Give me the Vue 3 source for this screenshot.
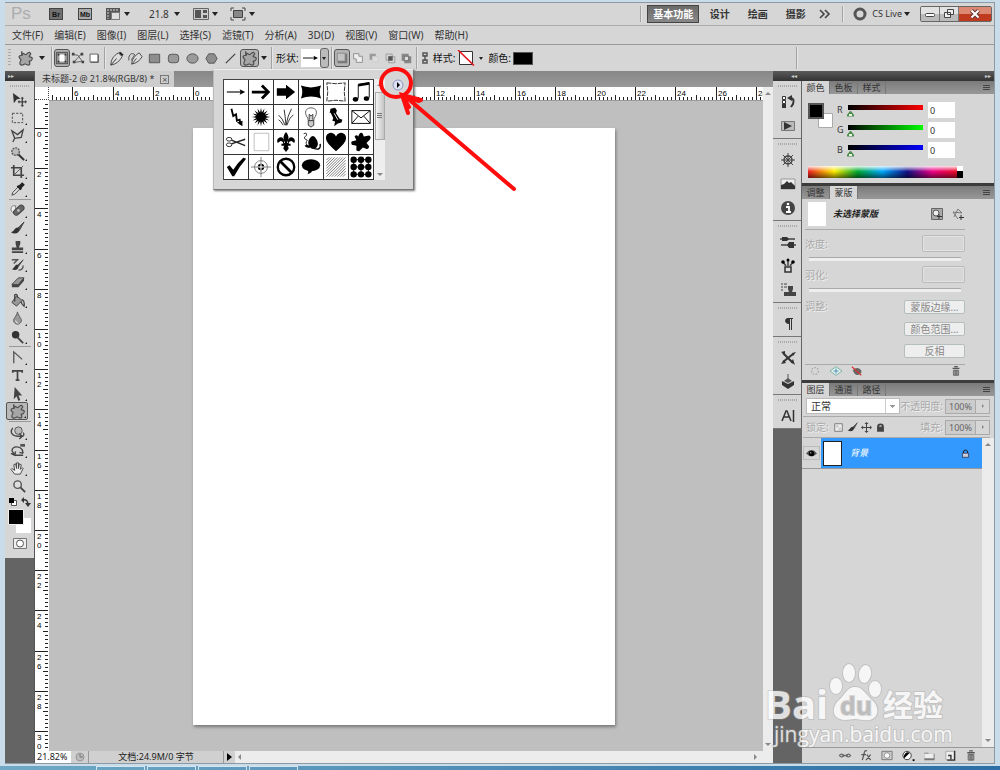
<template>
  <div class="desktop">
    <div class="window">
      <header class="title-bar">
        <span class="logo">Ps</span>
        <button class="app-badge" title="Bridge">Br</button>
        <button class="app-badge" title="Mini Bridge">Mb</button>
        <button class="title-tool" title="查看额外内容">
          <svg width="16" height="14" viewBox="0 0 16 14" v-html="icons.extras" />
          <i class="caret" />
        </button>
        <button class="title-tool zoom">21.8<i class="caret" /></button>
        <button class="title-tool" title="排列文档">
          <svg width="16" height="14" viewBox="0 0 16 14" v-html="icons.arrange" />
          <i class="caret" />
        </button>
        <button class="title-tool" title="屏幕模式">
          <svg width="16" height="14" viewBox="0 0 16 14" v-html="icons.screen" />
          <i class="caret" />
        </button>
        <span class="spacer" />
        <span class="bar-line" />
        <nav class="workspaces">
          <button
            v-for="(name, i) in workspaces"
            :key="name"
            :class="{ active: i === 0 }"
          >{{ name }}</button>
        </nav>
        <svg class="more" width="12" height="10" viewBox="0 0 12 10">
          <path d="M1 1l4 4-4 4M6 1l4 4-4 4" fill="none" stroke="#444" stroke-width="1.6" />
        </svg>
        <span class="bar-line" />
        <button class="cs-live">
          <svg width="14" height="14" viewBox="0 0 14 14">
            <circle cx="7" cy="7" r="5" fill="none" stroke="#555" stroke-width="3" />
          </svg>
          CS Live<i class="caret" />
        </button>
        <div class="win-buttons">
          <button title="最小化">
            <svg width="12" height="10" viewBox="0 0 12 10"><rect x="1.500" y="4.500" width="9" height="3" rx="1" fill="#fff" stroke="#444" /></svg>
          </button>
          <button title="还原">
            <svg width="12" height="10" viewBox="0 0 12 10"><path d="M4.500.500h6v5h-6zM1.500 3.500h6v5h-6z" fill="#eee" stroke="#444" /></svg>
          </button>
          <button class="close" title="关闭">
            <svg width="12" height="10" viewBox="0 0 12 10">
              <path d="M2.500 1.500l7 7M9.500 1.500l-7 7" stroke="#633" stroke-width="4" />
              <path d="M2.500 1.500l7 7M9.500 1.500l-7 7" stroke="#fff" stroke-width="2" />
            </svg>
          </button>
        </div>
      </header>

      <nav class="menu-bar">
        <button v-for="item in menus" :key="item">{{ item }}</button>
      </nav>

      <div class="options-bar">
        <span class="grip-v" />
        <button class="opt" title="自定形状工具"><svg viewBox="0 0 16 16" v-html="icons.blob" /></button>
        <button class="opt-caret" title="预设"><i class="caret" /></button>
        <span class="bar-line" />
        <button
          v-for="name in ['shapeLayer', 'pathMode', 'fillPixels']"
          :key="name"
          class="opt narrow"
          :class="{ pressed: name === 'shapeLayer' }"
        ><svg viewBox="0 0 16 16" v-html="icons[name]" /></button>
        <span class="bar-line" />
        <button
          v-for="name in drawTools"
          :key="name"
          class="opt"
          :class="{ pressed: name === 'blob' }"
        ><svg viewBox="0 0 16 16" v-html="icons[name]" /></button>
        <button class="opt-caret slim" title="几何选项"><i class="caret" /></button>
        <span class="bar-line" />
        <span class="opt-label">形状:</span>
        <span class="shape-preview"><svg viewBox="0 0 24 24" v-html="shapes[0]" /></span>
        <button class="shape-drop" title="形状"><i class="caret small" /></button>
        <span class="bar-line" />
        <button
          v-for="name in combineModes"
          :key="name"
          class="opt narrow"
          :class="{ pressed: name === 'newLayer' }"
        ><svg viewBox="0 0 16 16" v-html="icons[name]" /></button>
        <span class="bar-line" />
        <svg class="link" width="8" height="12" viewBox="0 0 8 12">
          <path d="M2 1h4v3H2zM2 8h4v3H2zM4 3v6" fill="none" stroke="#555" stroke-width="1.500" />
        </svg>
        <span class="opt-label">样式:</span>
        <svg class="no-style" width="18" height="16" viewBox="0 0 18 16">
          <path d="M2.500 1.500h13v13h-13z" fill="#fff" stroke="#333" />
          <path d="M1 0l16 15.500" stroke="#e8141c" stroke-width="1.600" />
        </svg>
        <button class="opt-caret slim" title="样式"><i class="caret small" /></button>
        <span class="opt-label">颜色:</span>
        <button class="color-chip" title="颜色" />
        <span class="spacer" />
        <span class="bar-line far" />
      </div>

      <div class="work-area">
        <aside class="tool-column">
          <div class="column-head"><span>▸▸</span></div>
          <div class="tools">
            <span class="grip-h" />
            <template v-for="(group, g) in tools" :key="g">
              <hr v-if="g > 0">
              <button
                v-for="name in group"
                :key="name"
                class="tool"
                :class="{ selected: name === 'blob', more: name !== 'move' && name !== 'zoom' }"
              ><svg viewBox="0 0 16 16" v-html="icons[name]" /></button>
            </template>
            <svg class="color-wells" width="26" height="60" viewBox="0 0 26 60">
              <path d="M4.500 5.500h5v5h-5z" fill="#fff" stroke="#555" />
              <path d="M2 3h5v5H2z" />
              <path d="M16 5q5-1 5 5" fill="none" stroke="#333" stroke-width="1.500" />
              <path d="M17 2v6l-3-3zM18 8h6l-3 4z" fill="#333" />
              <path d="M9 23h15v15H9z" fill="#fff" />
              <path d="M1.500 14.500h15v15h-15z" fill="#000" stroke="#eee" />
              <path d="M6.500 43.500h13v10h-13z" fill="#eee" stroke="#777" />
              <circle cx="13" cy="48.500" r="3.500" fill="#fff" stroke="#555" />
            </svg>
          </div>
        </aside>

        <main class="document">
          <div class="doc-tabs">
            <div class="doc-tab">
              未标题-2 @ 21.8%(RGB/8) *
              <button title="关闭">×</button>
            </div>
          </div>
          <div class="doc-grid">
            <div class="ruler-corner" />
            <svg class="ruler top">
              <g v-for="t in topTicks" :key="t.pos">
                <path :d="`M${t.pos}.5 ${t.top}V13`" stroke="#222" />
                <text v-if="t.label !== null" :x="t.pos + 2" y="9">{{ t.label }}</text>
              </g>
            </svg>
            <svg class="ruler side">
              <g v-for="t in sideTicks" :key="t.pos">
                <path :d="`M${t.top} ${t.pos}.5H13`" stroke="#222" />
                <template v-if="t.label !== null">
                  <text
                    v-for="(ch, i) in String(t.label)"
                    :key="i"
                    x="2"
                    :y="t.pos + 9 + i * 9"
                  >{{ ch }}</text>
                </template>
              </g>
            </svg>
            <div class="canvas"><div class="page" /></div>
            <div class="scroll-v">
              <i class="arrow up" />
              <i class="arrow down" />
            </div>
            <footer class="status-bar">
              <input aria-label="缩放" value="21.82%">
              <svg width="17" height="12" viewBox="0 0 17 12">
                <circle cx="9" cy="6" r="4" fill="#bbb" stroke="#999" />
                <path d="M9 3v3h3" fill="none" stroke="#777" />
              </svg>
              <span class="doc-size">文档:24.9M/0 字节</span>
              <button title="状态栏选项"><i class="arrow right dark" /></button>
              <div class="scroll-h">
                <i class="arrow left" />
                <i class="arrow right" />
              </div>
            </footer>
          </div>

          <div class="shape-picker">
            <div class="shape-grid">
              <button v-for="(shape, i) in shapes" :key="i">
                <svg viewBox="0 0 24 24" v-html="shape" />
              </button>
            </div>
            <div class="picker-scroll">
              <i class="arrow up" />
              <span class="thumb"><i /></span>
              <i class="arrow down" />
            </div>
            <button class="picker-menu" title="形状菜单">
              <svg width="12" height="12" viewBox="0 0 12 12">
                <circle cx="6" cy="6" r="5" fill="#dfe2f4" stroke="#8f95bd" />
                <path d="M5 3l3 3-3 3z" />
              </svg>
            </button>
          </div>
          <svg class="callout" width="150" height="130" viewBox="0 0 150 130">
            <ellipse cx="21" cy="18" rx="15" ry="14" />
            <path d="M139 124L31 32M33 48L27 30L46 35M27 30L34 42M30 31L44 36" />
          </svg>
        </main>

        <div class="right-side">
          <div class="column-head wide"><span>◂◂</span><span>▸▸</span></div>
          <div class="right-body">
            <aside class="dock">
              <div v-for="(group, g) in dockGroups" :key="g" class="dock-group">
                <span class="grip-h" />
                <button v-for="name in group" :key="name">
                  <svg viewBox="0 0 16 16" v-html="icons[name]" />
                </button>
              </div>
            </aside>

            <div class="panels">
              <section class="panel">
                <div class="panel-tabs">
                  <button class="active">颜色</button>
                  <button>色板</button>
                  <button>样式</button>
                  <i class="panel-menu" />
                </div>
                <div class="color-body">
                  <div class="color-main">
                    <svg class="wells" width="26" height="28" viewBox="0 0 26 28">
                      <path d="M10.500 10.500h14v14h-14z" fill="#fff" stroke="#aaa" />
                      <path d="M1 1h14v14H1z" stroke="#555" stroke-width="2" />
                    </svg>
                    <div class="channels">
                      <div v-for="c in channels" :key="c.name" class="channel">
                        <label :for="'ch-' + c.name">{{ c.name }}</label>
                        <input
                          type="range"
                          min="0"
                          max="255"
                          :value="c.value"
                          :class="c.name"
                          :aria-label="c.name"
                        >
                        <input :id="'ch-' + c.name" class="value" :value="c.value">
                      </div>
                    </div>
                  </div>
                  <div class="spectrum"><i /></div>
                </div>
              </section>

              <section class="panel">
                <div class="panel-tabs">
                  <button>调整</button>
                  <button class="active">蒙版</button>
                  <i class="panel-menu" />
                </div>
                <div class="mask-body">
                  <div class="mask-head">
                    <span class="mask-thumb" />
                    <strong>未选择蒙版</strong>
                    <svg width="14" height="14" viewBox="0 0 14 14" v-html="icons.pixelMask" />
                    <svg width="14" height="14" viewBox="0 0 14 14" v-html="icons.vectorMask" />
                  </div>
                  <div class="mask-row">
                    <label for="density">浓度:</label>
                    <input id="density" disabled>
                  </div>
                  <input class="flat-range" type="range" aria-label="浓度" disabled>
                  <div class="mask-row">
                    <label for="feather">羽化:</label>
                    <input id="feather" disabled>
                  </div>
                  <input class="flat-range" type="range" aria-label="羽化" disabled>
                  <div class="refine">
                    <span>调整:</span>
                    <div>
                      <button disabled>蒙版边缘...</button>
                      <button disabled>颜色范围...</button>
                      <button disabled>反相</button>
                    </div>
                  </div>
                  <div class="mask-foot">
                    <svg viewBox="0 0 14 14"><circle cx="7" cy="7" r="4" fill="none" stroke="#aaa" stroke-width="1.500" stroke-dasharray="2 1.500" /></svg>
                    <svg viewBox="0 0 14 14"><path d="M0 7l7-5 7 5-7 5z" fill="#e4f3ef" stroke="#6fa8a0" /><path d="M7 4v6M4 7h6" stroke="#3a87a8" /></svg>
                    <svg viewBox="0 0 14 14"><path d="M2 6q5-5 10 0v3q-4 5-8 1z" fill="#666" /><path d="M1 2l11 10" stroke="#d33" stroke-width="1.300" /></svg>
                    <span class="spacer" />
                    <svg viewBox="0 0 14 14" v-html="icons.trash" />
                  </div>
                </div>
              </section>

              <section class="panel layers">
                <div class="panel-tabs">
                  <button class="active">图层</button>
                  <button>通道</button>
                  <button>路径</button>
                  <i class="panel-menu" />
                </div>
                <div class="layer-opts">
                  <select aria-label="混合模式">
                    <option>正常</option>
                  </select>
                  <label for="opacity">不透明度:</label>
                  <input id="opacity" value="100%" disabled>
                  <button class="step" disabled title="不透明度"><i class="arrow right" /></button>
                </div>
                <div class="layer-opts">
                  <span class="faded">锁定:</span>
                  <button
                    v-for="name in ['lockPixels', 'brush', 'lockMove', 'lock']"
                    :key="name"
                    class="lock-btn"
                  ><svg viewBox="0 0 16 16" v-html="icons[name]" /></button>
                  <label for="fill">填充:</label>
                  <input id="fill" value="100%" disabled>
                  <button class="step" disabled title="填充"><i class="arrow right" /></button>
                </div>
                <div class="layer-list">
                  <div class="layer-rows">
                    <div class="layer-row">
                      <button class="eye" title="可见性">
                        <svg viewBox="0 0 16 16"><path d="M0 8q8-10 16 0q-8 8-16 0z" fill="#555" /><circle cx="8" cy="8" r="4" /><circle cx="7" cy="7" r="1" fill="#fff" /></svg>
                      </button>
                      <div class="layer-item">
                        <span class="layer-thumb" />
                        <em>背景</em>
                        <svg viewBox="0 0 16 16" v-html="icons.layerLock" />
                      </div>
                    </div>
                  </div>
                  <div class="scroll-v">
                    <i class="arrow up" />
                    <i class="arrow down" />
                  </div>
                </div>
                <div class="layer-foot">
                  <button v-for="name in layerActions" :key="name">
                    <svg viewBox="0 0 14 14" v-html="icons[name]" />
                  </button>
                </div>
              </section>
            </div>
          </div>
        </div>
      </div>
    </div>

    <div class="taskbar"><i v-for="n in 4" :key="n" /></div>

    <svg class="watermark" width="190" height="92" viewBox="0 0 190 92">
      <g class="brand">
        <text x="0" y="61" font-size="40" font-weight="700">Bai</text>
        <ellipse cx="71" cy="28" rx="6" ry="8" />
        <ellipse cx="84" cy="15" rx="6" ry="9" />
        <ellipse cx="100" cy="16" rx="6" ry="9" transform="rotate(10 100 16)" />
        <ellipse cx="110" cy="31" rx="6" ry="8" />
        <path d="M90 29C98 29 101 37 107 42C114 48 115 59 105 62C99 63 95 61 90 61C85 61 80 63 75 61C66 58 68 47 74 42C80 37 82 29 90 29z" />
        <text class="du" x="75" y="57" font-size="25" font-weight="700">du</text>
        <text x="118" y="58" font-size="30" font-weight="700">经验</text>
        <text x="9" y="84" font-size="21">jingyan.baidu.com</text>
      </g>
    </svg>
  </div>
</template>

<script setup>
import { computed } from 'vue'

const menus = [
  '文件(F)', '编辑(E)', '图像(I)', '图层(L)', '选择(S)', '滤镜(T)',
  '分析(A)', '3D(D)', '视图(V)', '窗口(W)', '帮助(H)'
]
const workspaces = ['基本功能', '设计', '绘画', '摄影']

const drawTools = ['pen', 'freePen', 'rect', 'roundRect', 'ellipse', 'polygon', 'line', 'blob']
const combineModes = ['newLayer', 'add', 'subtract', 'intersect', 'exclude']

const tools = [
  ['move', 'marquee', 'lasso', 'wand', 'crop', 'dropper'],
  ['heal', 'brush', 'stamp', 'history', 'eraser', 'bucket', 'blur', 'dodge'],
  ['penTool', 'type', 'select', 'blob'],
  ['rotate3d', 'orbit3d', 'hand', 'zoom']
]

const dockGroups = [
  ['historyPanel', 'play'],
  ['wheel', 'histogram', 'info'],
  ['brushes', 'brushCup', 'cloneSource'],
  ['paragraph'],
  ['toolPresets', 'cube'],
  ['character']
]

const layerActions = ['chain', 'fx', 'mask', 'adjust', 'folder', 'newItem', 'trash']

const channels = [
  { name: 'R', value: 0 },
  { name: 'G', value: 0 },
  { name: 'B', value: 0 }
]

const icons = {
  extras: '<path d="M1 1h14v5H6v7H1z" fill="#555"/><path d="M6.500 5.500h8v7h-8z" fill="#ddd" stroke="#777"/><path d="M2 3h12M3 5v7" stroke="#ddd" stroke-dasharray="2 1"/>',
  arrange: '<path d="M.500 1.500h15v11H.500z" fill="#ccc" stroke="#666"/><path d="M2 3h6v8H2zM10 3h4v3h-4zM10 8h4v3h-4z" fill="#555"/>',
  screen: '<path d="M3.500 3.500h9v7h-9z" fill="#888" stroke="#444"/><path d="M1 4V1h3M12 1h3v3M15 10v3h-3M4 13H1v-3" fill="none" stroke="#444"/>',
  blob: '<path d="M4 3C6 1 7 4 8 4S11 0 13 2 11 5 12 6s4 0 3 3-3 1-3 2 2 4-1 4-3-2-4-1-5 2-5-1 2-3 1-4-3-3-1-4 3 0 3-1-2-2-1-3z" fill="#a5a5a5" stroke="#4a4a4a" stroke-width="1.200"/>',
  shapeLayer: '<path d="M1.500 1.500h13v13h-13z" fill="#999" stroke="#444"/><path d="M5 4h6v8H5z" fill="#fff"/><path d="M3 3h2v2H3zM11 3h2v2h-2zM3 11h2v2H3zM11 11h2v2h-2z" fill="#333"/>',
  pathMode: '<path d="M3 13L12 3M3 4l5 1 5 7M3 13l9-1" fill="none" stroke="#555"/><path d="M1 2h3v3H1zM11 2h3v3h-3zM2 11h3v3H2zM12 11h3v3h-3z" fill="#444"/>',
  fillPixels: '<path d="M3.500 3.500h9v9h-9z" fill="#fff" stroke="#555"/><path d="M4 13h9V4" fill="none" stroke="#555"/>',
  pen: '<path d="M2 15C2 9 5 5 10 2l4 4C11 11 8 14 2 15z" fill="#ddd" stroke="#444"/><path d="M2 15l6-7M11 2l3 3 1-1-3-3z" stroke="#333"/>',
  freePen: '<path d="M4 14C4 9 7 5 12 2l3 4C13 10 9 13 4 14z" fill="#ddd" stroke="#444"/><path d="M4 14l5-6M1 10C0 5 3 2 6 3S3 8 4 10" fill="none" stroke="#444"/>',
  rect: '<path d="M2.500 3.500h11v9h-11z" fill="#8d8d8d" stroke="#555"/>',
  roundRect: '<rect x="2.500" y="3.500" width="11" height="9" rx="3" fill="#9a9a9a" stroke="#555"/>',
  ellipse: '<ellipse cx="8" cy="8" rx="6" ry="5" fill="#9a9a9a" stroke="#555"/>',
  polygon: '<path d="M5 3h6l3 5-3 5H5L2 8z" fill="#8d8d8d" stroke="#555"/>',
  line: '<path d="M3 13L13 3" stroke="#444" stroke-width="1.300"/>',
  newLayer: '<path d="M3 3h11v11H3z" fill="#777"/><path d="M2.500 2.500h9v9h-9z" fill="#c4c4c4" stroke="#888"/>',
  add: '<path d="M3 3h6v3h4v7H6V9H3z" fill="#eee" stroke="#888"/>',
  subtract: '<path d="M3 3h7v3H6v4H3z" fill="#999"/><path d="M6.500 6.500h6v6h-6z" fill="#ddd" stroke="#ccc"/>',
  intersect: '<path d="M3.500 3.500h7v7h-7zM6.500 6.500h7v7h-7z" fill="none" stroke="#999"/><path d="M6 6h5v5H6z" fill="#555"/>',
  exclude: '<path d="M3 3h8v8H3zM6 6h8v8H6z" fill="#888"/><path d="M6 6h5v5H6z" fill="#ddd" stroke="#666"/>',
  move: '<path d="M1 1l8 6-4 1-3 4z" fill="#333"/><path d="M11 6v9M7 10.500h8" stroke="#444" stroke-width="1.500"/><path d="M11 5l2 2H9zM11 16l2-2H9zM6 10.500l2-2v4zM16 10.500l-2-2v4z" fill="#444"/>',
  marquee: '<path d="M2.500 3.500h11v10h-11z" fill="none" stroke="#444" stroke-dasharray="2.500 1.500"/>',
  lasso: '<path d="M2 3l6 4 6-5-2 8-7 1zM5 11l-2 4" fill="none" stroke="#444" stroke-width="1.400"/>',
  wand: '<circle cx="6" cy="6" r="4" fill="#bbb" stroke="#555" stroke-width="1.500" stroke-dasharray="2 1"/><path d="M9 9l6 6" stroke="#333" stroke-width="2.200"/>',
  crop: '<path d="M4 1v11h11M1 4h11v11" fill="none" stroke="#444" stroke-width="1.800"/><path d="M5 11L14 2" stroke="#555"/>',
  dropper: '<path d="M2 14l1-3 6-6 2 2-6 6z" fill="#ddd" stroke="#444"/><path d="M8 4l4 4M10 5l3-3 1 1-3 3" stroke="#222" stroke-width="2.500"/>',
  heal: '<path d="M6 3q-5-1-5 4 1 5 5 2z" fill="#eee" stroke="#777"/><rect x="3" y="5" width="13" height="6" rx="3" transform="rotate(-42 9 8)" fill="#666" stroke="#444"/><circle cx="9" cy="8" r="1.500" fill="#bbb"/>',
  brush: '<path d="M15 1L8 8l2 2z" fill="#555" stroke="#444"/><path d="M9 7c-4-1-4 4-8 5 4 3 9 1 9-3z" fill="#333"/>',
  stamp: '<path d="M6 2h5v3L9.500 9H14v3H2V9h5L6 5zM2 13h12v2H2z" fill="#444"/>',
  history: '<path d="M14 3L8 9l1 1z" fill="#555" stroke="#444"/><path d="M8 8c-3 0-3 4-6 5 4 2 7 0 7-3z" fill="#333"/><path d="M2 3h6L4 7M9 14q5 0 5-5" fill="none" stroke="#555" stroke-width="1.500"/>',
  eraser: '<path d="M9 3h6l-6 7H2z" fill="#999" stroke="#444"/><path d="M2 10h7v3H2zM9 10l6-7v3l-6 7z" fill="#444"/>',
  bucket: '<path d="M7 3l6 5-6 6-5-4z" fill="#999" stroke="#444"/><path d="M5 9V2q3-2 3 3M13 7q3 2 2 7-3-2-3-5" fill="none" stroke="#444" stroke-width="1.400"/>',
  blur: '<path d="M8 1C9 6 13 8 12 11 11 15 5 15 4 11 3 8 7 6 8 1z" fill="#999" stroke="#555"/><path d="M6 10q0 3 3 3" fill="none" stroke="#eee"/>',
  dodge: '<circle cx="6" cy="6" r="4" fill="#333"/><path d="M8 9l6 6" stroke="#444" stroke-width="2"/>',
  penTool: '<path d="M4 14V2l9 8" fill="none" stroke="#555" stroke-width="1.400"/>',
  type: '<path d="M3 5V3h10v2M8 3v10M6 13h4" fill="none" stroke="#444" stroke-width="1.800"/>',
  select: '<path d="M5 1l8 9H9l2 5-2 1-2-5-3 3z" fill="#444"/>',
  rotate3d: '<circle cx="9" cy="6" r="4" fill="#bbb" stroke="#555"/><path d="M3 3C-1 8 3 12 9 12h4l-3-3M13 12l-3 3M14 8q2 3-1 4" fill="none" stroke="#444" stroke-width="1.400"/>',
  orbit3d: '<path d="M11 1h5v3h-5z" fill="#555"/><path d="M2 8C3 3 10 3 13 7l1 4M2 8l3 5h9M1 11l4 2 1-4M14 11l-4-1" fill="none" stroke="#444" stroke-width="1.500"/>',
  hand: '<path d="M5 14L1 9l1-1 3 2-1-6 2-1 1 5V2h2v6l1-5 2 1-1 5 2-2 1 1-3 6z" fill="#eee" stroke="#444"/>',
  zoom: '<circle cx="6" cy="6" r="4" fill="#ddd" stroke="#555" stroke-width="1.500"/><path d="M9 9l5 5" stroke="#444" stroke-width="2"/>',
  historyPanel: '<path d="M2.500 2.500h3v3h-3zM2.500 6.500h3v3h-3z" fill="#fff" stroke="#333"/><path d="M2 10h4v4H2z" fill="#333"/><path d="M10 4q5 0 3 6l-2 3" fill="none" stroke="#333" stroke-width="2"/><path d="M7 4l5-3v6z" fill="#333"/>',
  play: '<path d="M1.500 3.500h13v9h-13z" fill="#bbb" stroke="#777"/><path d="M4 4l8 4-8 4z" fill="#333"/>',
  wheel: '<circle cx="8" cy="8" r="4" fill="none" stroke="#444" stroke-width="1.500"/><path d="M8 1v14M1 8h14M3 3l10 10M13 3L3 13" stroke="#444"/>',
  histogram: '<path d="M1 3h14v10H1z" fill="#eee" stroke="#999"/><path d="M1 13V9l3-1 3-3 2 2 2-1 4 4v3z" fill="#333"/>',
  info: '<circle cx="8" cy="8" r="7" fill="#444"/><path d="M6 7h3v5M6 12h5" fill="none" stroke="#fff" stroke-width="1.800"/><circle cx="8" cy="4" r="1.300" fill="#fff"/>',
  brushes: '<path d="M0 5h15M1 11h15" stroke="#444" stroke-width="1.500"/><path d="M2 3h5l2 2-2 2H2zM9 8h5v6H9L7 11z" fill="#333"/>',
  brushCup: '<path d="M5 9h6v5H5z" fill="#ddd" stroke="#333" stroke-width="1.500"/><path d="M6 8L3 4M8 8V2M10 8l3-4" stroke="#444" stroke-width="1.500"/><circle cx="3" cy="4" r="1.800"/><circle cx="8" cy="2" r="1.500"/><circle cx="13" cy="4" r="1.800"/>',
  cloneSource: '<path d="M8 4h5v3l-1 3h4v4H4v-4h5L8 7z" fill="#444"/><path d="M1 2h2M4 2h3M1 5h2M4 5h3M1 8h2" stroke="#444"/>',
  paragraph: '<path d="M8 2h5v1h-1v11h-1V3h-1v11H9V8C4 8 4 2 8 2z" fill="#333"/>',
  toolPresets: '<path d="M3 3l10 10M13 4L3 12" stroke="#333" stroke-width="2"/><path d="M1 2l4-1v4zM12 3l4-1-3 4zM1 14l3-4 2 3zM15 15l-4-3 2-3z" fill="#333"/>',
  cube: '<path d="M2 7l6 3 6-3v4l-6 4-6-4z" fill="#333"/><path d="M8 0v7" stroke="#555"/><path d="M8 4l4 3-4 2-4-2z" fill="#555"/>',
  character: '<path d="M2 13L6 3h1l4 10M4 9h5M13.500 2v12" fill="none" stroke="#333" stroke-width="1.500"/>',
  pixelMask: '<path d="M1.500 1.500h11v11h-11z" fill="#aaa" stroke="#666"/><circle cx="6" cy="6" r="3" fill="#eee" stroke="#555"/><path d="M9 7v5M7 9.500h5" stroke="#333"/>',
  vectorMask: '<path d="M3 10L7 2l4 4-9-1 5 7" fill="none" stroke="#777"/><path d="M10 8v5M8 10.500h5" stroke="#333"/>',
  trash: '<path d="M3 4h8M5 2h4" stroke="#555" stroke-width="1.500"/><path d="M4 6h6v6H4z" fill="#aaa" stroke="#666"/><path d="M6 6v6M8 6v6" stroke="#555"/>',
  lockPixels: '<path d="M2.500 2.500h11v11h-11z" fill="#eee" stroke="#555"/><path d="M4 4h4v4H4zM8 8h4v4H8z" fill="#ccc"/>',
  lockMove: '<path d="M8 2v12M2 8h12" stroke="#444" stroke-width="1.500"/><path d="M8 0l3 3H5zM8 16l3-3H5zM0 8l3-3v6zM16 8l-3-3v6z" fill="#444"/>',
  lock: '<path d="M3 14V7q0-5 5-5t5 5v7z" fill="#444"/><path d="M6 7V6q2-3 4 0v1z" fill="#bbb"/>',
  layerLock: '<path d="M5 8V5q3-4 6 0v3" fill="none" stroke="#223" stroke-width="1.500"/><path d="M3.500 7.500h9v6h-9z" fill="#ccd" stroke="#223"/>',
  chain: '<path d="M1 7q2-3 5 0-3 3-5 0zM8 7q3-3 5 0-2 3-5 0zM4 7h6" fill="none" stroke="#666" stroke-width="1.400"/>',
  fx: '<path d="M8 2q-3-1-3 3L3 12M2 6h5M8 6l4 6M12 6l-5 6" fill="none" stroke="#555" stroke-width="1.300"/>',
  mask: '<path d="M1.500 2.500h11v9h-11z" fill="#ccc" stroke="#777"/><circle cx="7" cy="7" r="3" fill="#fff" stroke="#888"/>',
  adjust: '<circle cx="6" cy="7" r="4.500" fill="#fff" stroke="#333"/><path d="M3 10a4.500 4.500 0 0 1 6-6z"/><path d="M12 11h2v2h-2z"/>',
  folder: '<path d="M2 4h4l1 1h6v7H2z" fill="#777"/><path d="M2 5h10v5H2z" fill="#eee"/>',
  newItem: '<path d="M2.500 2.500h9v9h-9z" fill="#eee" stroke="#aaa"/><path d="M12 2v10H4M5 7h3v4" fill="none" stroke="#333" stroke-width="1.500"/>'
}

// Sunburst outline, sixteen rays
const burst = () => {
  const pts = []
  for (let i = 0; i < 32; i++) {
    const r = i % 2 ? 5 : 10
    const a = (i * Math.PI) / 16
    pts.push(`${(12 + r * Math.cos(a)).toFixed(1)},${(12 + r * Math.sin(a)).toFixed(1)}`)
  }
  return `<polygon points="${pts.join(' ')}"/>`
}

const dots = [4, 12, 20]
  .flatMap((y) => [4, 12, 20].map((x) => `<circle cx="${x}" cy="${y}" r="3.500"/>`))
  .join('') + '<path d="M4 4h16v16H4zM12 4v16M4 12h16" fill="none" stroke="#000"/>'

const hatch = Array.from({ length: 14 }, (_, i) => {
  const k = 3 * (i + 1)
  const x1 = Math.max(0, k - 21)
  const x2 = Math.min(21, k)
  return `M${x1 + 1.5} ${k - x1 + 1.5}L${x2 + 1.5} ${k - x2 + 1.5}`
}).join('')

const shapes = [
  '<path d="M2 12h16" stroke="#000" stroke-width="1.200"/><path d="M22 12l-6-3 1 3-1 3z"/>',
  '<path d="M2 12h18M13 5l7 7-7 7" fill="none" stroke="#000" stroke-width="3"/>',
  '<path d="M2 8h10V4l10 8-10 8v-4H2z"/>',
  '<path d="M1 5q11 4 22 0-3 7 0 14-11-4-22 0 3-7 0-14z"/>',
  '<path d="M2 2l10 1 10-1-1 10 1 10-10-1-10 1 1-10z" fill="none" stroke="#222" stroke-dasharray="5 1"/>',
  '<path d="M9 19V4l12-2v16" fill="none" stroke="#000"/><path d="M9 3l12-2v3L9 6z"/><ellipse cx="6" cy="20" rx="3" ry="2.500"/><ellipse cx="18" cy="19" rx="3" ry="2.500"/>',
  '<path d="M7 3l2 8 3-2 1 7 3-1 1 5" fill="none" stroke="#000" stroke-width="2"/><path d="M13 18l6-2v6z"/>',
  burst(),
  '<path d="M11 21Q8 13 4 10M12 21Q11 10 10 4M12 21Q14 10 18 3M13 21Q16 12 20 10M9 21Q6 16 4 15" fill="none" stroke="#222"/>',
  '<path d="M9 16q0-3-2-5C4 4 9 2 12 2s8 2 5 9q-2 2-2 5z" fill="none" stroke="#555"/><path d="M9 16h6v5l-3 2-3-2zM10 15V9l2 2 2-2v6" fill="#ccc" stroke="#333"/>',
  '<path d="M6 3l5-1 2 3-1 3 4 6 3 1-1 3-4 1-4 3 1-5-3-1 1-3-3-6-1 1z"/><path d="M10 8l4 7" stroke="#fff"/>',
  '<path d="M2 5h20v14H2zM2 5l10 8L22 5M2 19l7-8M22 19l-7-8" fill="none" stroke="#000"/>',
  '<path d="M7 10L22 16M7 14L22 9" stroke="#222" stroke-width="1.500"/><ellipse cx="4.500" cy="9" rx="3" ry="2" fill="none" stroke="#222"/><ellipse cx="4.500" cy="15" rx="3" ry="2" fill="none" stroke="#222"/>',
  '<path d="M4.500 2.500h16v19h-16z" fill="none" stroke="#bbb"/>',
  '<path d="M12 1q5 5 1 12h1q0-7 5-6 4 2 2 6l-3-2q-3 0-3 3h2v2h-3l1 3-3 4-3-4 1-3H7v-2h2q0-3-3-3l-3 2Q1 9 5 7q5-1 5 6h1Q7 6 12 1z"/>',
  '<path d="M4 3q4-2 3 2-5 3 1 5-3 3 1 8" fill="none" stroke="#222"/><path d="M10 9q4-7 8 0 3 5 0 9-4 3-7 0-4 1-6-2 3-2 5 0-2-3 0-7z"/><path d="M15 19q8 3 7-5" fill="none" stroke="#000" stroke-width="1.500"/>',
  '<path d="M12 22Q1 13 1 8t5-6q4 0 6 4 2-4 6-4 5 1 5 6t-11 14z"/>',
  '<path d="M9 6q2-6 5-3l1 3 6-1q3 2 0 5l-3 3 3 4q-1 4-4 2l-3-1-4 4q-4 0-3-3V16l-5-1q-2-4 2-4l3-1-2-4q2-3 4 0z"/>',
  '<path d="M2 12l3-2 4 5Q14 7 20 2l3 1Q16 11 10 22H8z"/>',
  '<circle cx="12" cy="12" r="7" fill="none" stroke="#777"/><circle cx="12" cy="12" r="3.500"/><path d="M12 1v22M1 12h22" stroke="#777"/><path d="M12 9v6M9 12h6" stroke="#fff"/>',
  '<circle cx="12" cy="12" r="9" fill="none" stroke="#000" stroke-width="2.500"/><path d="M6 6l12 12" stroke="#000" stroke-width="3"/>',
  '<ellipse cx="12" cy="10" rx="10" ry="6.500"/><path d="M8 14h6q-1 5-6 6 2-2 0-6z"/>',
  `<path d="${hatch}" stroke="#777" stroke-width="1"/>`,
  dots
]

// 10 ticks per two centimetres, a label on every tenth one
const buildTicks = (zero, length, step) => {
  const ticks = []
  const first = Math.ceil(-zero / step)
  for (let i = first; zero + i * step < length; i++) {
    const major = i % 10 === 0
    ticks.push({
      pos: Math.round(zero + i * step),
      top: major ? 0 : i % 5 === 0 ? 8 : 10,
      label: major ? Math.abs(i / 5) : null
    })
  }
  return ticks
}

const topTicks = computed(() => buildTicks(144, 715, 4.02))
const sideTicks = computed(() => buildTicks(28, 652, 4.02))
</script>

<style>
html,
body {
  margin: 0;
  background: #b9cfe0;
}
</style>

<style scoped>
.desktop {
  position: relative;
  display: flex;
  flex-direction: column;
  height: 100vh;
  overflow: hidden;
  background: #c9dcea;
  color: #333;
  font: 10px/12px "Noto Sans", "Noto Sans CJK SC", sans-serif;
}

button,
input,
select {
  box-sizing: border-box;
  margin: 0;
  padding: 0;
  border: 0;
  border-radius: 0;
  background: none;
  color: inherit;
  font: inherit;
}

svg {
  display: block;
  flex-shrink: 0;
}

.window {
  flex: 1;
  min-height: 0;
  display: flex;
  flex-direction: column;
  margin: 2px 5px;
  border: 1px solid #8c9aa6;
  border-width: 1px 1px 1px 0;
  background: #d6d6d6;
}

.spacer {
  flex: 1;
}

.caret {
  display: inline-block;
  border: 3px solid transparent;
  border-top: 4px solid #222;
  border-bottom: 0;
}

.caret.small {
  border-width: 3px 2px 0;
}

.bar-line {
  width: 1px;
  height: 16px;
  background: #a2a2a2;
  box-shadow: 1px 0 #e6e6e6;
}

/* Title bar */
.title-bar {
  display: flex;
  align-items: center;
  height: 22px;
  padding-right: 2px;
  border-bottom: 1px solid #aaa;
}

.logo {
  width: 38px;
  padding-left: 6px;
  font: 17px/20px "Liberation Sans", sans-serif;
  color: #adadad;
}

.app-badge {
  width: 14px;
  height: 12px;
  margin-right: 15px;
  border: 1px solid #444;
  background: #707070;
  color: #111;
  font: bold 7px/9px "Liberation Sans", sans-serif;
}

.app-badge + .app-badge {
  background: #aaa;
  margin-right: 13px;
}

.title-tool {
  display: flex;
  align-items: center;
  gap: 3px;
  margin-right: 12px;
}

.title-tool.zoom {
  gap: 5px;
  margin: 0 13px 0 7px;
}

.workspaces {
  display: flex;
  margin-left: 6px;
  gap: 3px;
}

.workspaces button {
  width: 35px;
  height: 18px;
  font-weight: bold;
}

.workspaces button.active {
  width: 52px;
  border: 1px solid #444;
  background: linear-gradient(#6a6a6a, #888);
  color: #fff;
}

.more {
  margin: 0 11px 0 6px;
}

.cs-live {
  display: flex;
  align-items: center;
  gap: 5px;
  margin: 0 10px;
  font-size: 9px;
}

.cs-live .caret {
  margin-left: -3px;
}

.win-buttons {
  display: flex;
  height: 14px;
  border: 1px solid #666;
  border-radius: 2px;
}

.win-buttons button {
  display: flex;
  align-items: center;
  justify-content: center;
  width: 19px;
  border-right: 1px solid #777;
  background: linear-gradient(#e2e2e2 50%, #bbb 50%);
}

.win-buttons .close {
  width: 32px;
  border-right: 0;
  background: linear-gradient(#dd8873 50%, #c03a1f 50%);
}

/* Menu */
.menu-bar {
  display: flex;
  align-items: center;
  gap: 11px;
  height: 18px;
  padding-left: 7px;
  border-bottom: 1px solid #999;
}

/* Options */
.options-bar {
  display: flex;
  align-items: center;
  height: 26px;
}

.options-bar .bar-line {
  height: 22px;
  margin: 0 2px;
}

.options-bar .far {
  margin-right: 197px;
}

.grip-v {
  width: 3px;
  height: 18px;
  margin: 0 5px 0 3px;
  background: repeating-linear-gradient(#aaa 0 1px, transparent 1px 3px);
}

.opt {
  display: flex;
  align-items: center;
  justify-content: center;
  width: 19px;
  height: 18px;
}

.opt.narrow {
  width: 16px;
}

.opt svg {
  width: 15px;
  height: 15px;
}

.opt.narrow svg {
  width: 14px;
  height: 14px;
}

.opt.pressed {
  border: 1px solid #555;
  border-radius: 3px;
  background: #b4b4b4;
}

.opt-caret {
  display: flex;
  align-items: center;
  justify-content: center;
  width: 14px;
  height: 18px;
}

.opt-caret.slim {
  width: 10px;
}

.opt-label {
  margin: 0 2px;
  color: #111;
}

.shape-preview {
  width: 19px;
  height: 18px;
  background: #fff;
}

.shape-preview svg {
  width: 19px;
  height: 18px;
}

.shape-drop {
  display: flex;
  align-items: center;
  justify-content: center;
  width: 9px;
  height: 20px;
  border: 1px solid #666;
  border-radius: 3px;
  background: #bbb;
}

.link {
  margin: 0 2px;
}

.no-style {
  margin-right: 1px;
}

.color-chip {
  width: 20px;
  height: 13px;
  border: 1px solid #555;
  background: #000;
}

/* Work area */
.work-area {
  flex: 1;
  display: flex;
  min-height: 0;
  background: #646464;
}

.column-head {
  display: flex;
  align-items: center;
  height: 10px;
  padding: 0 3px;
  background: linear-gradient(#5a5a5a, #333);
  color: #ccc;
  font: 6px/8px "DejaVu Sans", sans-serif;
}

.column-head.wide {
  justify-content: space-between;
  padding-left: 18px;
}

.grip-h {
  display: block;
  width: 20px;
  height: 2px;
  margin: 3px auto;
  background: repeating-linear-gradient(90deg, #aaa 0 1px, transparent 1px 2px);
}

.tool-column {
  width: 29px;
}

.tools {
  display: flex;
  flex-direction: column;
  align-items: center;
  padding-bottom: 3px;
  background: #d6d6d6;
}

.tools .grip-h {
  margin: 4px auto 3px;
}

.tools hr {
  width: 22px;
  height: 1px;
  margin: 1px 0;
  border: 0;
  background: #999;
}

.tool {
  position: relative;
  display: flex;
  align-items: center;
  justify-content: center;
  width: 22px;
  height: 18px;
}

.tool svg {
  width: 15px;
  height: 15px;
}

.tool.more::after {
  content: "";
  position: absolute;
  right: 1px;
  bottom: 1px;
  border: 1px solid #222;
  border-top-color: transparent;
  border-left-color: transparent;
}

.tool.selected {
  border: 1px solid #555;
  border-radius: 2px;
  background: #b8b8b8;
}

/* Document */
.document {
  position: relative;
  flex: 1;
  min-width: 0;
  display: flex;
  flex-direction: column;
  border-left: 1px solid #555;
}

.doc-tabs {
  display: flex;
  height: 16px;
  background: linear-gradient(#878787, #999);
}

.doc-tab {
  display: flex;
  align-items: center;
  gap: 6px;
  padding: 0 5px 0 7px;
  background: #cdcdcd;
  font-size: 9px;
}

.doc-tab button {
  width: 9px;
  height: 9px;
  border: 1px solid #777;
  color: #555;
  font-size: 9px;
  line-height: 7px;
}

.doc-grid {
  flex: 1;
  display: grid;
  min-height: 0;
  grid-template-columns: 14px 1fr 10px;
  grid-template-rows: 13px 1fr 12px;
}

.ruler-corner {
  background: #fff;
  border-right: 1px dotted #444;
  border-bottom: 1px dotted #444;
}

.ruler {
  width: 100%;
  height: 100%;
  background: #fff;
  overflow: hidden;
  font: 8px/9px "Liberation Sans", sans-serif;
}

.ruler.side {
  grid-row: 2;
}

.canvas {
  grid-row: 2;
  display: flex;
  align-items: center;
  justify-content: center;
  min-height: 0;
  padding-right: 4px;
  overflow: hidden;
  border-top: 1px solid #999;
  background: #bfbfbf;
}

.page {
  width: 422px;
  max-width: 90%;
  aspect-ratio: 422 / 597;
  background: #fff;
  box-shadow: 1px 2px 3px #777;
}

.scroll-v {
  display: flex;
  flex-direction: column;
  align-items: center;
  justify-content: space-between;
  box-sizing: border-box;
  padding: 5px 0;
  background: #ececec;
}

.doc-grid .scroll-v {
  grid-column: 3;
  grid-row: 1 / 3;
}

.arrow {
  border: 3px solid transparent;
}

.arrow.up {
  border-bottom-color: #888;
  border-top-width: 0;
}

.arrow.down {
  border-top-color: #888;
  border-bottom-width: 0;
}

.arrow.left {
  border-right-color: #888;
  border-left-width: 0;
}

.arrow.right {
  display: inline-block;
  border-left-color: #888;
  border-right-width: 0;
}

.arrow.dark {
  border-width: 4px 0 4px 5px;
  border-left-color: #000;
}

.status-bar {
  grid-column: 1 / 4;
  display: flex;
  align-items: center;
  background: #d0d0d0;
  color: #222;
}

.status-bar input {
  width: 36px;
  height: 12px;
  padding-left: 2px;
  background: #fff;
  font-size: 9px;
}

.doc-size {
  width: 134px;
  border: 1px solid #999;
  border-width: 0 1px;
  font-size: 9px;
  text-align: center;
}

.status-bar button {
  display: flex;
  justify-content: center;
  width: 11px;
}

.scroll-h {
  flex: 1;
  display: flex;
  align-items: center;
  justify-content: space-between;
  height: 12px;
  padding: 0 16px 0 3px;
  background: #ececec;
}

/* Shape picker */
.shape-picker {
  position: absolute;
  top: -2px;
  left: 178px;
  display: flex;
  align-items: flex-start;
  padding: 9px;
  border: 1px solid #aaa;
  border-color: #eee #777 #777 #bbb;
  background: #d6d6d6;
  box-shadow: 1px 1px 2px #777;
}

.shape-grid {
  display: grid;
  grid-template-columns: repeat(6, 25px);
  grid-auto-rows: 25px;
  border: 1px solid #444;
  border-width: 1px 0 0 1px;
}

.shape-grid button {
  display: flex;
  align-items: center;
  justify-content: center;
  border: 1px solid #333;
  border-width: 0 1px 1px 0;
  background: #fff;
}

.shape-grid svg {
  width: 22px;
  height: 22px;
}

.picker-scroll {
  display: flex;
  flex-direction: column;
  align-items: center;
  align-self: stretch;
  width: 11px;
  padding: 4px 0;
  background: #eee;
}

.picker-scroll .thumb {
  display: flex;
  align-items: center;
  justify-content: center;
  box-sizing: border-box;
  width: 10px;
  height: 48px;
  margin: 6px 0 auto;
  border: 1px solid #aaa;
  background: linear-gradient(90deg, #f4f4f4, #c4c4c4);
}

.picker-scroll .thumb i {
  width: 5px;
  height: 6px;
  background: repeating-linear-gradient(#777 0 1px, transparent 1px 2px);
}

.picker-menu {
  margin-left: 7px;
}

.callout {
  position: absolute;
  top: -6px;
  left: 340px;
  fill: none;
  stroke: #ff0d0d;
  stroke-width: 4;
  stroke-linecap: round;
}

/* Right side */
.right-side {
  display: flex;
  flex-direction: column;
  width: 221px;
}

.right-body {
  flex: 1;
  display: flex;
  min-height: 0;
  gap: 1px;
}

.dock {
  width: 28px;
}

.dock-group {
  padding-left: 1px;
  border-bottom: 1px solid #777;
  background: #d6d6d6;
}

.dock-group .grip-h {
  margin: 0 auto;
  border: solid #d6d6d6;
  border-width: 4px 0 3px;
}

.dock-group button {
  display: flex;
  align-items: center;
  justify-content: center;
  width: 27px;
  height: 24px;
}

.dock-group svg {
  width: 16px;
  height: 16px;
}

.panels {
  flex: 1;
  min-width: 0;
  display: flex;
  flex-direction: column;
  gap: 3px;
  background: #3c3c3c;
}

.panel {
  background: #d6d6d6;
}

.panel-tabs {
  display: flex;
  height: 13px;
  background: linear-gradient(#7b7b7b, #989898);
}

.panel-tabs button {
  width: 28px;
  border-right: 1px solid #777;
  color: #333;
  font-size: 9px;
  line-height: 12px;
}

.panel-tabs button.active {
  background: #d6d6d6;
}

.panel-menu {
  width: 7px;
  height: 6px;
  margin: 4px 4px 0 auto;
  background: repeating-linear-gradient(#444 0 1px, transparent 1px 2px);
}

.color-body {
  padding: 6px 6px 5px;
}

.color-main {
  display: flex;
  gap: 3px;
}

.wells {
  margin-top: 3px;
}

.channels {
  flex: 1;
}

.channel {
  display: flex;
  align-items: center;
  height: 20px;
}

.channel label {
  width: 10px;
  font-size: 9px;
}

.channel input[type="range"] {
  appearance: none;
  width: 76px;
  height: 14px;
  background-repeat: no-repeat;
  background-position: 1px 2px;
  background-size: 100% 5px;
}

.channel .R {
  background-image: linear-gradient(90deg, #000, #f00);
}

.channel .G {
  background-image: linear-gradient(90deg, #000, #0f0);
}

.channel .B {
  background-image: linear-gradient(90deg, #000, #00f);
}

.channel input::-webkit-slider-thumb {
  appearance: none;
  width: 7px;
  height: 6px;
  margin-top: 7px;
  background:
    linear-gradient(#e4f6de, #e4f6de) 2px 3px / 3px 2px no-repeat,
    #4d8a4d;
  clip-path: polygon(50% 0, 100% 70%, 100% 100%, 0 100%, 0 70%);
}

.channel .value {
  width: 27px;
  height: 16px;
  margin-left: 5px;
  padding-left: 2px;
  background: #fff;
  font-size: 9px;
}

.spectrum {
  display: flex;
  justify-content: flex-end;
  width: 155px;
  height: 12px;
  margin-top: 6px;
  background:
    linear-gradient(rgba(255, 255, 255, 0.9), transparent 45%, rgba(0, 0, 0, 0.55)),
    linear-gradient(90deg, #e22, #fe0 17%, #0a3 32%, #0af 48%, #118 64%, #e08 80%, #e11);
}

.spectrum i {
  width: 6px;
  background: linear-gradient(#fff 45%, #000 45%);
}

/* Masks */
.mask-body {
  padding: 3px 29px 3px 3px;
}

.mask-head {
  display: flex;
  align-items: center;
  gap: 7px;
  padding-bottom: 3px;
  border-bottom: 1px solid #aaa;
}

.mask-thumb {
  width: 18px;
  height: 24px;
  margin-left: 3px;
  background: #fff;
}

.mask-head strong {
  flex: 1;
  color: #222;
  font-size: 9px;
  font-style: italic;
}

.mask-row {
  display: flex;
  justify-content: space-between;
  align-items: center;
  height: 17px;
  margin-top: 5px;
}

.mask-row label,
.refine span,
.faded,
.layer-opts label {
  color: #aaa;
  text-shadow: 1px 1px #f0f0f0;
}

.mask-row input {
  width: 43px;
  height: 17px;
  border: 1px solid #bbb;
  border-radius: 2px;
  box-shadow: inset 0 0 0 1px #e2e2e2;
}

.flat-range {
  appearance: none;
  display: block;
  width: 152px;
  height: 4px;
  margin: 5px 4px 0;
  border-top: 1px solid #aaa;
  background: #eee;
}

.flat-range::-webkit-slider-thumb {
  appearance: none;
  width: 0;
}

.refine {
  display: flex;
  justify-content: space-between;
  margin-top: 8px;
  padding-bottom: 6px;
  border-bottom: 1px solid #aaa;
}

.refine div {
  display: flex;
  flex-direction: column;
  gap: 8px;
}

.refine button {
  width: 61px;
  height: 14px;
  border: 1px solid #b5bdbd;
  border-radius: 2px;
  background: #eee;
  color: #888;
  font-size: 10px;
  line-height: 11px;
}

.mask-foot {
  display: flex;
  gap: 7px;
  padding: 0 2px 0 3px;
}

.mask-foot svg {
  width: 14px;
  height: 12px;
}

/* Layers */
.panel.layers {
  flex: 1;
  display: flex;
  flex-direction: column;
  min-height: 0;
}

.layer-opts {
  display: flex;
  align-items: center;
  height: 20px;
  margin: 0 4px 0 1px;
  padding-left: 3px;
  border-bottom: 1px solid #aaa;
}

.layer-opts select {
  appearance: none;
  width: 94px;
  height: 16px;
  padding-left: 4px;
  border: 1px solid #bbb;
  background:
    conic-gradient(from -40deg at 50% 100%, #999 80deg, transparent 0) right 4px center / 5px 3px no-repeat,
    linear-gradient(90deg, transparent 78px, #ccc 78px 79px, transparent 79px),
    #fff;
}

.layer-opts label {
  margin-left: auto;
}

.layer-opts input {
  width: 31px;
  height: 15px;
  margin-left: 2px;
  border: 1px solid #aaa;
  background: #ccc;
  color: #666;
  font-size: 9px;
  text-align: center;
}

.step {
  display: flex;
  align-items: center;
  justify-content: center;
  width: 14px;
  height: 15px;
  border: 1px solid #aaa;
  border-left: 0;
}

.step .arrow {
  border-width: 2px 0 2px 2px;
}

.faded {
  margin-right: 3px;
}

.lock-btn {
  display: flex;
  justify-content: center;
  width: 14px;
}

.lock-btn svg {
  width: 11px;
  height: 11px;
}

.layer-list {
  flex: 1;
  display: flex;
  min-height: 0;
  border-bottom: 1px solid #999;
}

.layer-list .scroll-v {
  width: 12px;
}

.layer-rows {
  flex: 1;
}

.layer-row {
  display: flex;
  height: 30px;
  border-bottom: 1px solid #999;
}

.eye {
  width: 17px;
  margin: 8px 1px;
  border: 1px solid #bbb;
}

.eye svg {
  width: 11px;
  height: 11px;
  margin: 0 auto;
}

.layer-item {
  flex: 1;
  display: flex;
  align-items: center;
  gap: 8px;
  padding: 0 11px 0 2px;
  background: #3399ff;
  color: #fff;
}

.layer-thumb {
  width: 17px;
  height: 23px;
  border: 1px solid #222;
  background: #fff;
}

.layer-item em {
  flex: 1;
  font-size: 9px;
}

.layer-item svg {
  width: 11px;
  height: 11px;
}

.layer-foot {
  display: flex;
  justify-content: flex-end;
  gap: 7px;
  height: 15px;
  padding-right: 16px;
}

.layer-foot svg {
  width: 14px;
  height: 13px;
}

/* Bottom edge */
.taskbar {
  display: flex;
  gap: 2px;
  height: 4px;
  padding-left: 96px;
  background: linear-gradient(90deg, #6fa9c6, #2c6fa5);
}

.taskbar i {
  width: 47px;
  border: 1px solid #d5e6f0;
  border-bottom: 0;
}

.watermark {
  position: absolute;
  right: 45px;
  bottom: 20px;
  pointer-events: none;
  font-family: "Open Sans", "Noto Sans CJK SC", sans-serif;
}

.brand {
  fill: #fff;
  stroke: #999;
  stroke-width: 2;
  stroke-opacity: 0.4;
  paint-order: stroke;
  opacity: 0.8;
}

.brand .du {
  fill: #b8b8b8;
}
</style>
